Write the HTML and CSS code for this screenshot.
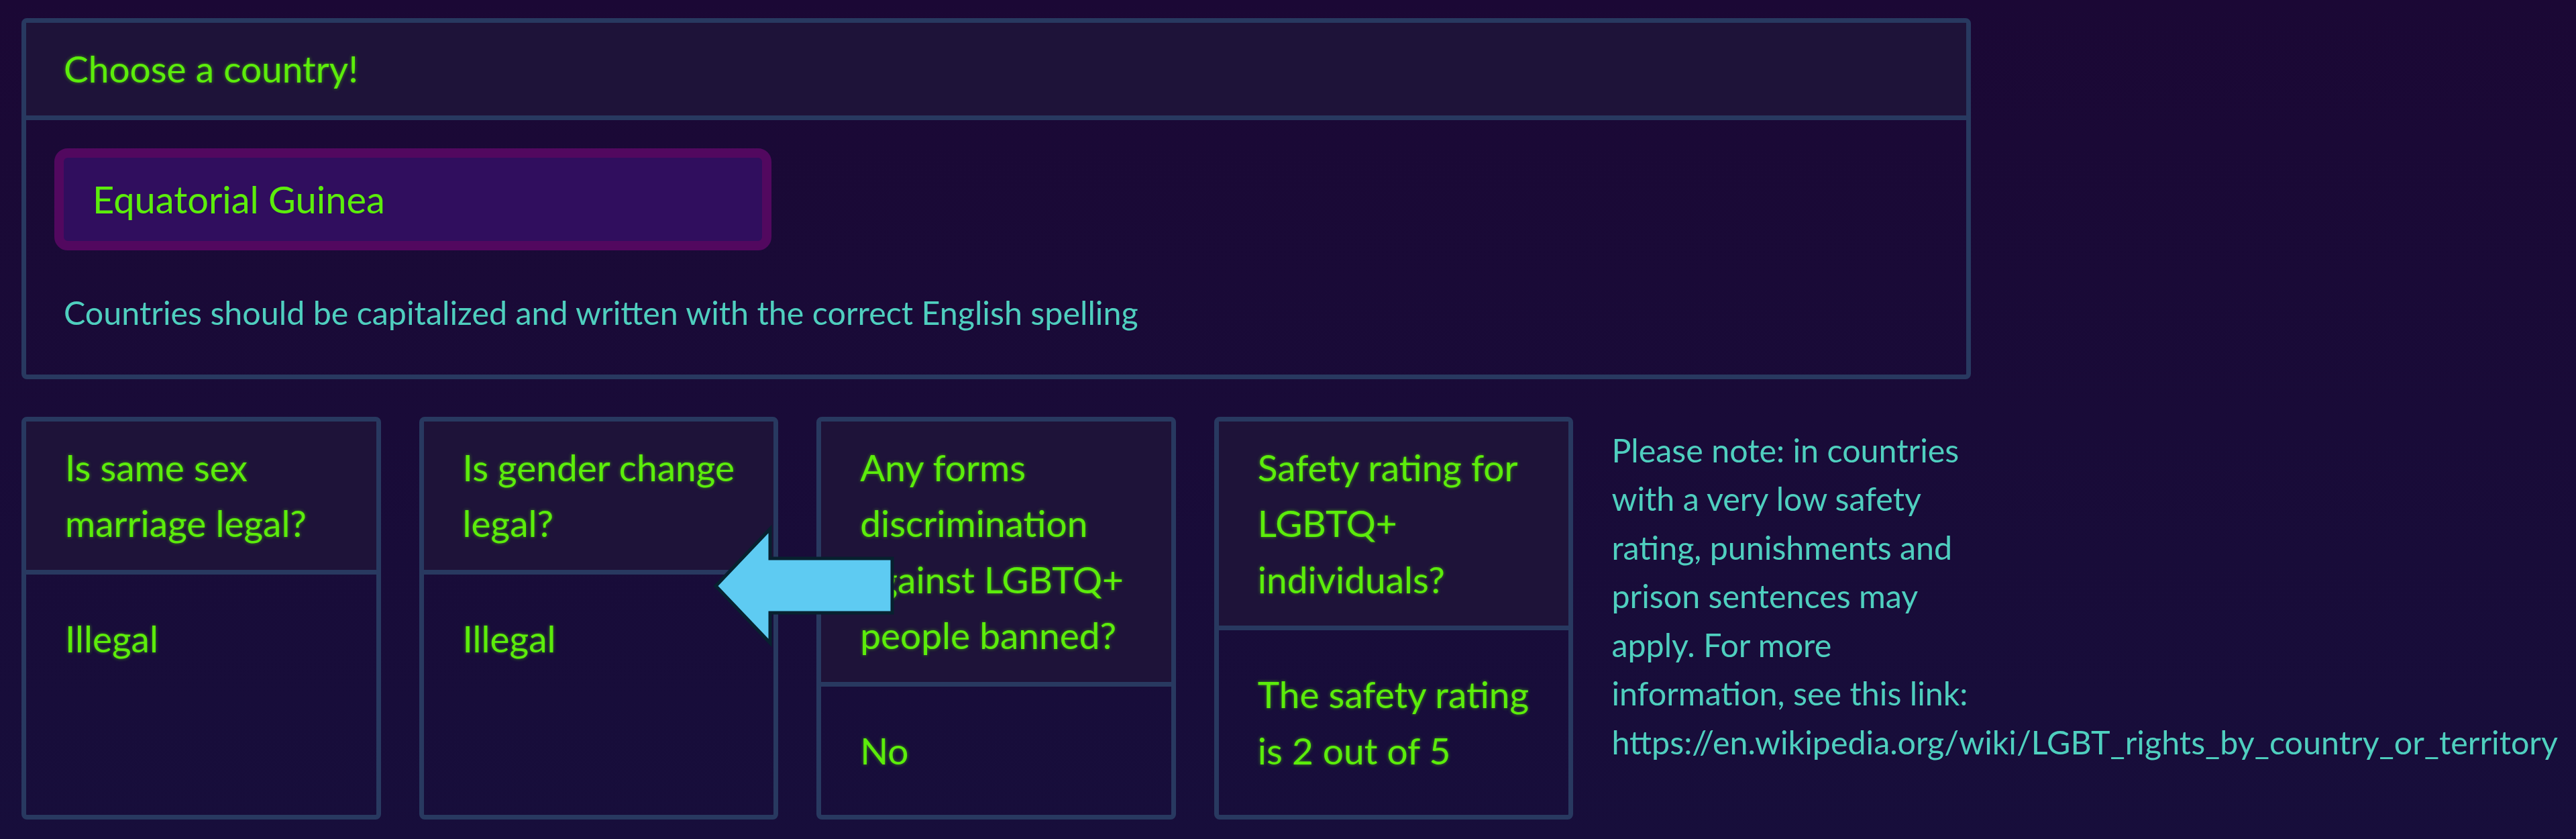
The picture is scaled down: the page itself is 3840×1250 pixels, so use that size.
FILE: index.html
```html
<!DOCTYPE html>
<html lang="en">
<head>
<meta charset="utf-8">
<title>LGBTQ+ rights by country</title>
<link rel="stylesheet" href="styles.css">
</head>
<body>
<main class="page">
  <section class="card top-card">
    <header class="card-head">Choose a country!</header>
    <div class="top-body">
      <input class="country-input" type="text" value="Equatorial Guinea">
      <p class="hint">Countries should be capitalized and written with the correct English spelling</p>
    </div>
  </section>

  <section class="results">
    <div class="card result">
      <div class="card-head">Is same sex marriage legal?</div>
      <div class="card-body">Illegal</div>
    </div>
    <div class="card result">
      <div class="card-head">Is gender change legal?</div>
      <div class="card-body">Illegal</div>
    </div>
    <div class="card result">
      <div class="card-head">Any forms discrimination against LGBTQ+ people banned?</div>
      <div class="card-body">No</div>
    </div>
    <div class="card result">
      <div class="card-head">Safety rating for LGBTQ+ individuals?</div>
      <div class="card-body">The safety rating is 2 out of 5</div>
    </div>
    <p class="note">Please note: in countries with a very low safety rating, punishments and prison sentences may apply. For more information, see this link: https://en.wikipedia.org/wiki/LGBT_rights_by_country_or_territory</p>
  </section>

  <svg class="arrow" width="280" height="185" viewBox="0 0 280 185" aria-hidden="true">
    <polygon points="7,93 88,8 88,52 270,52 270,133 88,133 88,178" fill="#5ecbf2" stroke="#07212f" stroke-width="5" stroke-linejoin="miter"/>
  </svg>
</main>
</body>
</html>
```
FILE: styles.css
```css
html, body {
  margin: 0;
  padding: 0;
}

body {
  min-height: 1250px;
  background: linear-gradient(#1b0835, #170e3b);
  font-family: Lato, "Noto Sans", sans-serif;
  color: #5ced0b;
}

.page {
  position: relative;
  width: 2906px;
  padding: 27px 0 0 32px;
}

.card {
  border: 7px solid #283960;
  border-radius: 8px;
  min-width: 0;
}

.card-head {
  background: #1e1339;
  border-bottom: 7px solid #283960;
  padding: 27px 58px;
  font-size: 55px;
  line-height: 83.5px;
  color: #5ced0b;
  text-shadow: 0 0 5px rgba(92, 237, 11, 0.55);
}

.top-card .card-head {
  padding-left: 56px;
}

.top-body {
  padding: 42px 42px 0 42px;
}

.country-input {
  display: block;
  box-sizing: border-box;
  width: 1069px;
  height: 152px;
  margin: 0;
  padding: 0 0 0 43px;
  border: 14px solid #52085f;
  border-radius: 20px;
  background: #300e5e;
  font-family: Lato, "Noto Sans", sans-serif;
  font-size: 56px;
  color: #5ced0b;
  outline: none;
}

.hint {
  margin: 56px 0 0 14px;
  padding-bottom: 57px;
  font-size: 48.4px;
  line-height: 72px;
  color: #4fcfbf;
}

.results {
  display: grid;
  grid-template-columns: repeat(5, minmax(0, 1fr));
  column-gap: 57px;
  margin-top: 56px;
  align-items: stretch;
}

.result {
  display: flex;
  flex-direction: column;
}

.card-body {
  flex: 1;
  padding: 54px 58px;
  font-size: 55px;
  line-height: 83.5px;
  color: #5ced0b;
  text-shadow: 0 0 5px rgba(92, 237, 11, 0.55);
}

.note {
  min-width: 0;
  margin: 0;
  padding-top: 13px;
  font-size: 48.4px;
  line-height: 72.5px;
  color: #4fcfbf;
}

.arrow {
  position: absolute;
  left: 1060px;
  top: 780px;
}
```
